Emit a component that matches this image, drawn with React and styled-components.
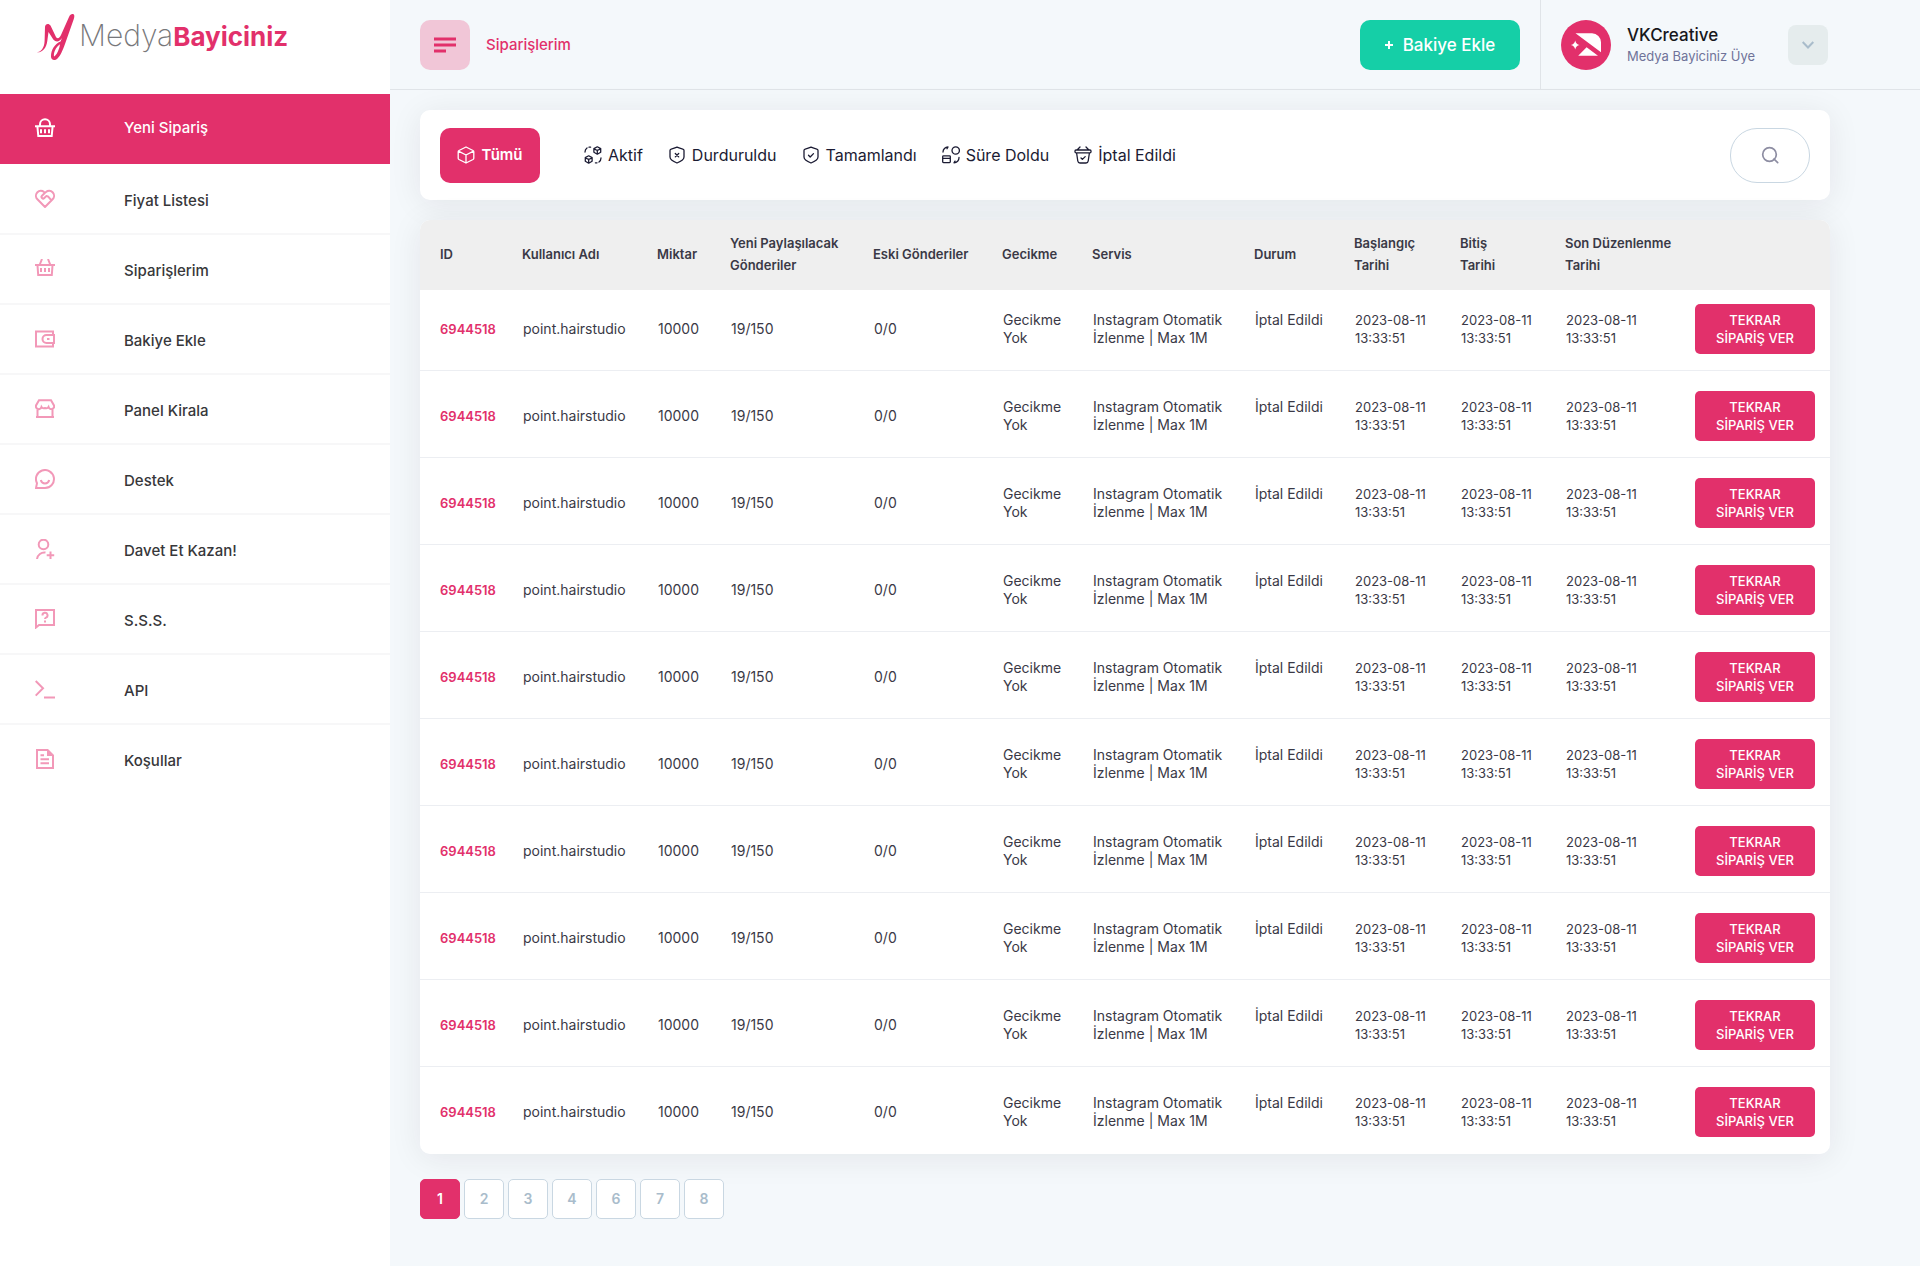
import React from "react";
import styled, { createGlobalStyle, css } from "styled-components";

const pink = "#e2306b";
const ink = "#3a3946";
const line = "#e0e4e8";
const shadow = "0 4px 32px rgba(40, 20, 40, 0.08)";

const GlobalStyle = createGlobalStyle`
  *, *::before, *::after { box-sizing: border-box; }
  body {
    margin: 0;
    background: #f4f8fb;
    color: ${ink};
    font-family: Inter, "Liberation Sans", sans-serif;
    font-size: 14px;
    line-height: 18px;
  }
  a { color: inherit; text-decoration: none; }
  button { border: 0; padding: 0; font: inherit; color: inherit; cursor: pointer; }
  ul { list-style: none; margin: 0; padding: 0; }
`;

const Shell = styled.div`
  display: grid;
  grid-template-columns: 390px minmax(0, 1fr);
  min-height: 100vh;
`;

const Sidebar = styled.aside`
  background: #fff;
`;

const Logo = styled.a`
  display: flex;
  align-items: flex-start;
  height: 94px;
  padding: 12px 0 0 36px;
`;

const LogoMark = styled.svg`
  width: 40px;
  height: 50px;
  margin-right: 3px;
`;

const LogoText = styled.span`
  color: #77777a;
  font-size: 30px;
  font-weight: 200;
  line-height: 46px;
`;

const LogoStrong = styled.span`
  color: ${pink};
  font-size: 26px;
  font-weight: 700;
`;

const NavLink = styled.a`
  display: flex;
  align-items: center;
  height: 70px;
  padding-left: 35px;
  color: #37373a;
  font-size: 15px;
  font-weight: 500;
  border-bottom: 2px solid #f7f7f8;

  svg {
    width: 20px;
    height: 20px;
    margin-right: 69px;
    color: #f298b8;
  }

  span { padding-top: 3px; }

  ${(p) =>
    p.$active &&
    css`
      margin-bottom: 1px;
      background: ${pink};
      color: #fff;
      border-bottom-color: ${pink};
      svg { color: #fff; }
      span { padding-top: 0; }
    `}

  ${(p) => p.$last && css`border-bottom-color: transparent;`}
`;

const Header = styled.header`
  display: flex;
  align-items: center;
  height: 90px;
  padding: 0 92px 0 30px;
  border-bottom: 1px solid ${line};
`;

const MenuButton = styled.button`
  display: grid;
  place-items: center;
  width: 50px;
  height: 50px;
  border-radius: 10px;
  background: #f1c6d7;

  svg { color: ${pink}; }
`;

const PageTitle = styled.h1`
  margin: 0 auto 0 16px;
  color: ${pink};
  font-size: 15px;
  font-weight: 500;
`;

const TopUpButton = styled.button`
  display: flex;
  align-items: center;
  justify-content: center;
  gap: 10px;
  width: 160px;
  height: 50px;
  margin-right: 20px;
  border-radius: 10px;
  background: #15cfa7;
  color: #fff;
  font-size: 17px;
  font-weight: 500;
`;

const Profile = styled.div`
  display: flex;
  align-items: center;
  gap: 16px;
  height: 89px;
  padding-left: 20px;
  border-left: 1px solid ${line};
`;

const ProfileText = styled.div`
  min-width: 145px;
`;

const ProfileName = styled.div`
  color: #17171b;
  font-size: 17px;
  font-weight: 500;
  line-height: 22px;
`;

const ProfileRole = styled.div`
  color: #6f7399;
  font-size: 13px;
  line-height: 20px;
`;

const DropButton = styled.button`
  display: grid;
  place-items: center;
  width: 40px;
  height: 40px;
  border-radius: 8px;
  background: #e5eced;

  svg { color: #a9bccb; }
`;

const Content = styled.main`
  padding: 20px 90px 40px 30px;
`;

const FilterBar = styled.section`
  display: flex;
  align-items: center;
  justify-content: space-between;
  height: 90px;
  padding: 0 20px;
  border-radius: 10px;
  background: #fff;
  box-shadow: ${shadow};
`;

const Filters = styled.div`
  display: flex;
  align-items: center;
  gap: 25px;
`;

const FilterButton = styled.button`
  display: flex;
  align-items: center;
  gap: 6px;
  height: 55px;
  background: none;
  color: #1b1b33;
  font-size: 16px;

  svg { width: 18px; height: 18px; }

  ${(p) =>
    p.$active &&
    css`
      justify-content: center;
      width: 100px;
      margin-right: 19px;
      border-radius: 10px;
      background: ${pink};
      color: #fff;
      font-size: 15px;
      font-weight: 600;
    `}
`;

const SearchButton = styled.button`
  display: grid;
  place-items: center;
  width: 80px;
  height: 55px;
  border: 1px solid #c9d7e2;
  border-radius: 27px;
  background: #fff;

  svg { color: #8d8da2; }
`;

const TableCard = styled.section`
  overflow: hidden;
  border-radius: 10px;
  background: #fff;
`;

const TableShadow = styled.div`
  margin-top: 20px;
  border-radius: 10px;
  box-shadow: ${shadow};
`;

const Table = styled.table`
  width: 100%;
  table-layout: fixed;
  border-collapse: separate;
  border-spacing: 0;
`;

const HeadCell = styled.th`
  height: 70px;
  padding: 0 0 2px 20px;
  background: #efefef;
  font-size: 13px;
  font-weight: 600;
  line-height: 22px;
  text-align: left;
  white-space: pre-line;
`;

const Cell = styled.td`
  padding: 20px 0 16px 21px;
  border-bottom: 1px solid #eceef2;
  font-size: ${(p) => (p.$compact ? "13px" : "14px")};
  white-space: pre-line;

  tr:first-child > & { padding-top: 14px; }
  tr:last-child > & { border-bottom-color: transparent; }
`;

const OrderId = styled.span`
  margin-left: -1px;
  color: ${pink};
  font-weight: 600;
`;

const TwoLine = styled.div`
  min-height: 36px;
`;

const ReorderButton = styled.button`
  display: block;
  width: 120px;
  height: 50px;
  margin-left: -1px;
  border-radius: 5px;
  background: ${pink};
  color: #fff;
  font-weight: 500;
`;

const Pages = styled.nav`
  display: flex;
  gap: 4px;
  margin-top: 25px;
`;

const PageButton = styled.button`
  width: 40px;
  height: 40px;
  border: 1px solid ${(p) => (p.$active ? pink : "#c9d7e2")};
  border-radius: 5px;
  background: ${(p) => (p.$active ? pink : "#fff")};
  color: ${(p) => (p.$active ? "#fff" : "#a9bccb")};
  font-weight: 600;
`;

const Glyph = ({ width = 2, size = 20, children, ...rest }) => (
  <svg
    viewBox={`0 0 ${size} ${size}`}
    width={size}
    height={size}
    fill="none"
    stroke="currentColor"
    strokeWidth={width}
    aria-hidden="true"
    {...rest}
  >
    {children}
  </svg>
);

const navItems = [
  {
    label: "Yeni Sipariş",
    icon: (
      <path d="M5 7.5V6.2a5 5 0 0 1 10 0v1.3M0 8.2h20M2.4 8.5l.9 9.6h13.4l.9-9.6M6 11.3v4M10 11.3v4M14 11.3v4" />
    ),
  },
  {
    label: "Fiyat Listesi",
    icon: (
      <path
        strokeLinejoin="round"
        d="M10 18 2.4 10.3a5 5 0 0 1 0-7A4.8 4.8 0 0 1 9 3l1 .8 1-.8a4.8 4.8 0 0 1 6.6.3 5 5 0 0 1 0 7ZM10 3.8 7 6.7a1.6 1.6 0 0 0 2.3 2.3l1.9-1.9 1.8.3 3.2 3.8"
      />
    ),
  },
  {
    label: "Siparişlerim",
    icon: <path d="M7 0 4.8 5.500M13 0l2.200 5.500M0 6h20M2.500 6.500l.7 9.500h13.600l.7-9.500M6 9v4M10 9v4M14 9v4" />,
  },
  {
    label: "Bakiye Ekle",
    icon: <path d="M18 6V2.500H1v15h17V14M19 6h-7.500a4 4 0 0 0 0 8H19ZM12 10h2.500" />,
  },
  {
    label: "Panel Kirala",
    icon: (
      <path d="M4 1.200h12l3 5.300a2.800 2.800 0 0 1-5.500 1.500 2.800 2.800 0 0 1-3.500 1 2.800 2.800 0 0 1-3.500-1A2.800 2.800 0 0 1 1 6.500ZM2.500 9v8.500M17.500 9v8.500M1 18h18" />
    ),
  },
  {
    label: "Destek",
    icon: <path d="M1 19h9a9 9 0 1 0-8-4.800ZM5.800 11a4.300 4.300 0 0 0 8.400 0" />,
  },
  {
    label: "Davet Et Kazan!",
    icon: (
      <>
        <circle cx="8.500" cy="5.500" r="4.800" />
        <path d="M2 20a7.500 7.500 0 0 1 8.500-6.500M15.500 12.500v7.500M11.700 16.300h7.500" />
      </>
    ),
  },
  {
    label: "S.S.S.",
    icon: (
      <path d="M1 18.500V1h18v15H4ZM7.500 6.500a2.500 2.500 0 1 1 3.500 2.100c-.7.300-1 .700-1 1.400M10 11.500v2" />
    ),
  },
  { label: "API", icon: <path d="m.7 2 7.300 7.300-7.300 7.300M9 18.500h11" /> },
  {
    label: "Koşullar",
    icon: (
      <>
        <path d="M12.500 1H2v18h16V6.500M5.500 6.200H9M5.500 10.200h8.500M5.500 14.200h8.500" />
        <path d="M12 0h1l6 6v1h-7Z" fill="currentColor" stroke="none" />
      </>
    ),
  },
];

const shield =
  "M9 1.200c2 .9 4 1.500 5.800 1.900.7.200 1.200.8 1.200 1.500v6.500c0 2.600-4.200 4.900-7 5.900-2.800-1-7-3.300-7-5.900V4.600c0-.7.500-1.300 1.200-1.500C5 2.700 7 2.100 9 1.200Z";

const filterItems = [
  {
    label: "Tümü",
    icon: (
      <path
        strokeLinejoin="round"
        strokeLinecap="round"
        d="m9 1 7 3.500q.8.500.8 1.300v6.400q0 .8-.8 1.300L9 17l-7-3.500q-.8-.5-.8-1.300V5.800q0-.8.8-1.300ZM1.500 5.200 9 9l7.500-3.800M9 9v8"
      />
    ),
  },
  {
    label: "Aktif",
    icon: (
      <path
        strokeLinejoin="round"
        strokeLinecap="round"
        d="m13.300.8 3.400 1.800v3.700l-3.400 1.900-3.400-1.900V2.600ZM10 2.800l3.300 1.700 3.300-1.700M13.300 4.500V8M4.700 9.800l3.400 1.800v3.700l-3.400 1.900-3.400-1.900v-3.700ZM1.400 11.800l3.300 1.700L8 11.800M4.700 13.500V17M1 6a5 5 0 0 1 2-4M5 1.200h1.600M17 12a5 5 0 0 1-2 4M13 16.800h-1.600"
      />
    ),
  },
  {
    label: "Durduruldu",
    icon: <path strokeLinejoin="round" strokeLinecap="round" d={`${shield}M7.300 7.500l3.400 3.400M10.700 7.500l-3.400 3.400`} />,
  },
  {
    label: "Tamamlandı",
    icon: <path strokeLinejoin="round" strokeLinecap="round" d={`${shield}M6.500 9.300 8.200 11l3.300-3.400`} />,
  },
  {
    label: "Süre Doldu",
    icon: (
      <path
        strokeLinejoin="round"
        strokeLinecap="round"
        d="M10 4.500a3.700 3.700 0 1 0 7.400 0 3.700 3.700 0 1 0-7.400 0M1.500 9.800h6q.8 0 .8.800v5.200q0 .8-.8.800h-6q-.8 0-.8-.8v-5.200q0-.8.8-.8ZM.9 12.400h7.200M1 6a5 5 0 0 1 5-5L5 2.700M17 11.500a5 5 0 0 1-5 5.300l1-1.700"
      />
    ),
  },
  {
    label: "İptal Edildi",
    icon: (
      <path
        strokeLinejoin="round"
        strokeLinecap="round"
        d="M6 1 3.300 3.700M12 1l2.700 2.700M2 4h14q1 0 1 1v.8q0 1-1 1H2q-1 0-1-1V5q0-1 1-1ZM2.600 7l1.200 8q.3 2 2.200 2h6q1.900 0 2.200-2l1.200-8M7 12l1.400 1.400 2.800-2.800M5.500 4.200h7"
      />
    ),
  },
];

const columns = [
  { title: "ID", width: 82 },
  { title: "Kullanıcı Adı", width: 135 },
  { title: "Miktar", width: 73 },
  { title: "Yeni Paylaşılacak\nGönderiler", width: 143 },
  { title: "Eski Gönderiler", width: 129 },
  { title: "Gecikme", width: 90 },
  { title: "Servis", width: 162 },
  { title: "Durum", width: 100 },
  { title: "Başlangıç\nTarihi", width: 106 },
  { title: "Bitiş\nTarihi", width: 105 },
  { title: "Son Düzenlenme\nTarihi", width: 130 },
  { title: "", width: 155 },
];

const orders = Array.from({ length: 10 }, () => ({
  id: "6944518",
  user: "point.hairstudio",
  amount: "10000",
  fresh: "19/150",
  old: "0/0",
  delay: "Gecikme\nYok",
  service: "Instagram Otomatik\nİzlenme | Max 1M",
  status: "İptal Edildi",
  date: "2023-08-11\n13:33:51",
}));

export default function App() {
  return (
    <>
      <GlobalStyle />
      <Shell>
        <Sidebar>
          <Logo href="#">
            <LogoMark viewBox="0 0 40 50" aria-hidden="true">
              <path
                fill={pink}
                d="M.5 40.300C5 40 8.300 36 8.600 29L9 15C9.200 11.300 13 11 14.500 13.500L19.500 24C21 27.500 23.500 26.500 25 23L33 5C34.200 2.500 35.200 1.800 37 2 38.800 2.400 38.500 5 37.800 7L29 32C26.500 39 24.500 43.500 21.500 46.500 18.500 49.300 15 48 15 44.500 15 38 18.500 32 24.500 29.500L26 26C23.500 30 20 30.500 17.300 27.500L12.500 20 11.300 29C10.300 36.500 6 41 .5 40.300Z"
              />
              <path d="M18 44.500C17.300 41 19.500 35.500 24 32.300 23.300 37 21 43 18 44.500Z" fill="#fff" />
            </LogoMark>
            <LogoText>
              Medya<LogoStrong>Bayiciniz</LogoStrong>
            </LogoText>
          </Logo>
          <nav aria-label="Menü">
            <ul>
              {navItems.map((item, i) => (
                <li key={item.label}>
                  <NavLink href="#" $active={i === 0} $last={i === navItems.length - 1}>
                    <Glyph>{item.icon}</Glyph>
                    <span>{item.label}</span>
                  </NavLink>
                </li>
              ))}
            </ul>
          </nav>
        </Sidebar>

        <div>
          <Header>
            <MenuButton aria-label="Menüyü aç">
              <Glyph size={22} width={3}>
                <path d="M0 5h22M0 11h22M0 17h12" />
              </Glyph>
            </MenuButton>
            <PageTitle>Siparişlerim</PageTitle>
            <TopUpButton>
              <Glyph size={8} width={2}>
                <path d="M4 0v8M0 4h8" />
              </Glyph>
              Bakiye Ekle
            </TopUpButton>
            <Profile>
              <svg width="50" height="50" viewBox="0 0 50 50" aria-hidden="true">
                <circle cx="25" cy="25" r="25" fill={pink} />
                <path
                  fill="#fff"
                  d="M14.500 13.300H31a9 9 0 0 1 9 9v10ZM25.600 27.300 37 35.800H17.200ZM14.200 20.500q.8 3.700 4.300 4.500-3.500.8-4.300 4.500-.8-3.700-4.300-4.500 3.500-.8 4.300-4.500Z"
                />
              </svg>
              <ProfileText>
                <ProfileName>VKCreative</ProfileName>
                <ProfileRole>Medya Bayiciniz Üye</ProfileRole>
              </ProfileText>
              <DropButton aria-label="Hesap menüsü">
                <Glyph size={12}>
                  <path d="m.7 3 5.300 5.500L11.300 3" />
                </Glyph>
              </DropButton>
            </Profile>
          </Header>

          <Content>
            <FilterBar>
              <Filters>
                {filterItems.map((item, i) => (
                  <FilterButton key={item.label} $active={i === 0}>
                    <Glyph size={18} width={1.3}>
                      {item.icon}
                    </Glyph>
                    {item.label}
                  </FilterButton>
                ))}
              </Filters>
              <SearchButton aria-label="Ara">
                <Glyph size={18} width={1.7}>
                  <circle cx="8.500" cy="8.500" r="6.800" />
                  <path d="m13 13 3.700 3.700" strokeLinecap="round" />
                </Glyph>
              </SearchButton>
            </FilterBar>

            <TableShadow>
              <TableCard>
                <Table>
                  <colgroup>
                    {columns.map((c, i) => (
                      <col key={i} style={{ width: c.width }} />
                    ))}
                  </colgroup>
                  <thead>
                    <tr>
                      {columns.map((c, i) => (
                        <HeadCell key={i} scope="col">
                          {c.title}
                        </HeadCell>
                      ))}
                    </tr>
                  </thead>
                  <tbody>
                    {orders.map((o, i) => (
                      <tr key={i}>
                        <Cell $compact>
                          <OrderId>{o.id}</OrderId>
                        </Cell>
                        <Cell>{o.user}</Cell>
                        <Cell>{o.amount}</Cell>
                        <Cell>{o.fresh}</Cell>
                        <Cell>{o.old}</Cell>
                        <Cell>{o.delay}</Cell>
                        <Cell>{o.service}</Cell>
                        <Cell>
                          <TwoLine>{o.status}</TwoLine>
                        </Cell>
                        <Cell $compact>{o.date}</Cell>
                        <Cell $compact>{o.date}</Cell>
                        <Cell $compact>{o.date}</Cell>
                        <Cell $compact>
                          <ReorderButton>
                            TEKRAR
                            <br />
                            SİPARİŞ VER
                          </ReorderButton>
                        </Cell>
                      </tr>
                    ))}
                  </tbody>
                </Table>
              </TableCard>
            </TableShadow>

            <Pages aria-label="Sayfalar">
              {[1, 2, 3, 4, 6, 7, 8].map((n) => (
                <PageButton key={n} $active={n === 1} aria-current={n === 1 ? "page" : undefined}>
                  {n}
                </PageButton>
              ))}
            </Pages>
          </Content>
        </div>
      </Shell>
    </>
  );
}
